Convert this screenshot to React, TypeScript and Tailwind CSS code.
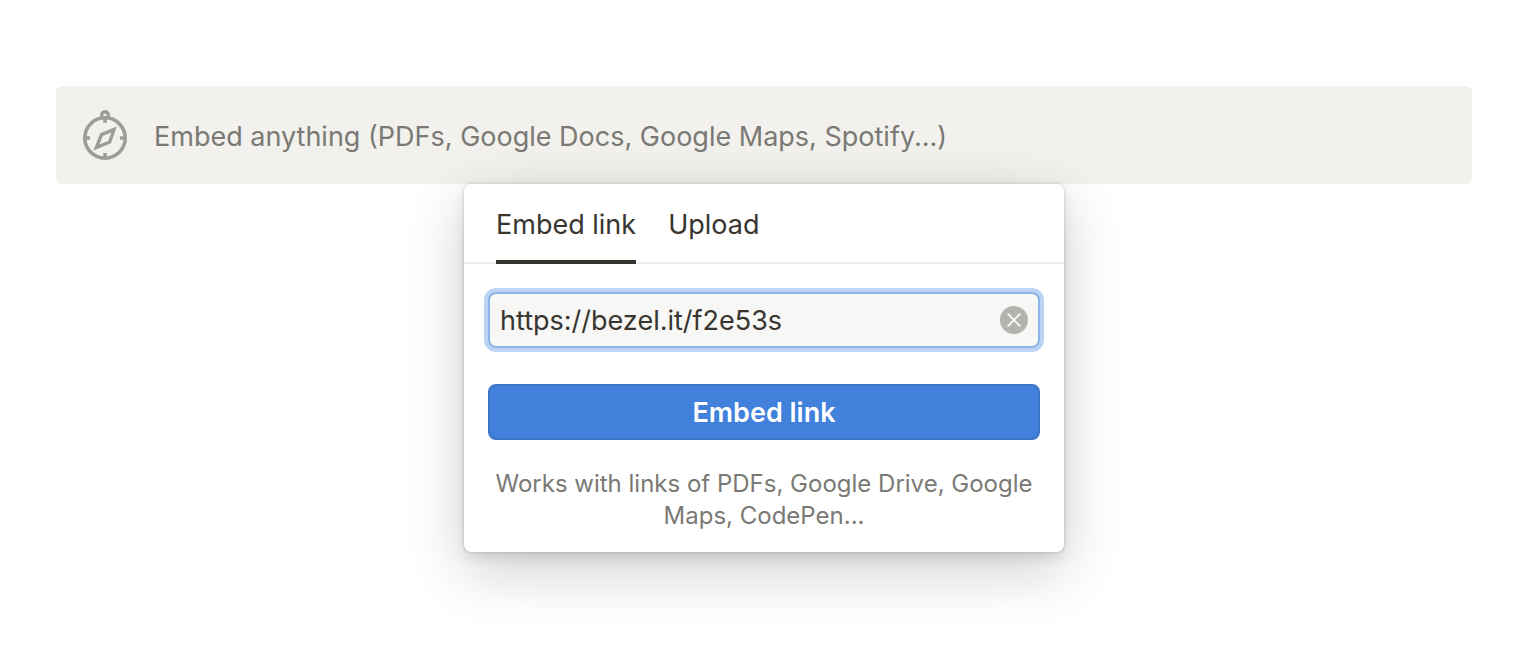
import { useState } from "react";

function CompassIcon() {
  return (
    <svg className="size-15 shrink-0" viewBox="0 0 60 60" fill="none" stroke="#9d9d98" strokeWidth="3.6" aria-hidden="true">
      <circle cx="29" cy="34" r="20.2" />
      <path d="M25.7 15v-4a3.3 3.3 0 0 1 6.6 0v4" strokeWidth="3.4" />
      <path d="M29 12.5v6.3M29 49v6M8 34h6M44 34h6" />
      <path
        d="M40.8 22.6 35 39.3 17.4 46.5 24.2 29.2ZM35.2 28.6 26.8 32 23.4 40.6 32.2 37Z"
        fill="#9d9d98"
        fillRule="evenodd"
        stroke="none"
      />
    </svg>
  );
}

export default function App() {
  const [url, setUrl] = useState("https://bezel.it/f2e53s");
  return (
    <main className="min-h-screen bg-white pt-[86px] pr-[60px] pb-14 pl-14 font-['Inter',sans-serif] text-[#37352f]">
      <div className="flex items-center gap-4.5 rounded-md bg-[#f2f1ed] px-5 pt-[18px] pb-5 text-[27px] leading-9 text-[#7a7974]">
        <CompassIcon />
        <span className="pt-1.5">Embed anything (PDFs, Google Docs, Google Maps, Spotify...)</span>
      </div>

      <section className="relative mx-auto w-full max-w-[600px] rounded-lg bg-white shadow-[0_0_0_2px_rgba(15,15,15,0.05),0_6px_12px_rgba(15,15,15,0.1),0_18px_60px_rgba(15,15,15,0.2)]">
        <div role="tablist" className="flex h-20 gap-8 border-b-2 border-[#ebebea] px-8 text-[27px]">
          <button role="tab" aria-selected="true" className="-mb-0.5 border-b-4 border-[#37352f] pt-1.5">
            Embed link
          </button>
          <button role="tab" aria-selected="false" className="-mb-0.5 border-b-4 border-transparent pt-1.5">
            Upload
          </button>
        </div>

        <form className="flex flex-col px-6 pt-7 pb-5" onSubmit={(e) => e.preventDefault()}>
          <div className="flex h-14 items-center rounded-lg border-2 border-[#8db4e8] bg-[#f7f7f5] px-2.5 ring-4 ring-[#bcd3f3]">
            <input
              type="text"
              aria-label="Link to embed"
              value={url}
              onChange={(e) => setUrl(e.target.value)}
              className="min-w-0 flex-1 bg-transparent pt-0.5 text-[27px] leading-9 outline-none"
            />
            <button type="button" aria-label="Clear link" onClick={() => setUrl("")}>
              <svg className="size-7" viewBox="0 0 28 28" aria-hidden="true">
                <circle cx="14" cy="14" r="14" fill="#b3b3af" />
                <path d="m8.2 8.2 11.6 11.6M19.8 8.2 8.2 19.8" stroke="#fafaf9" strokeWidth="1.9" strokeLinecap="round" />
              </svg>
            </button>
          </div>
          <button
            type="submit"
            className="mt-9 h-14 rounded-lg border-2 border-[#3c74c6] bg-[#4180db] pt-0.5 text-[27px] font-semibold text-white"
          >
            Embed link
          </button>
          <p className="mt-7 text-center text-[24px] leading-8 text-[#7a7974]">
            Works with links of PDFs, Google Drive, Google Maps, CodePen...
          </p>
        </form>
      </section>
    </main>
  );
}
